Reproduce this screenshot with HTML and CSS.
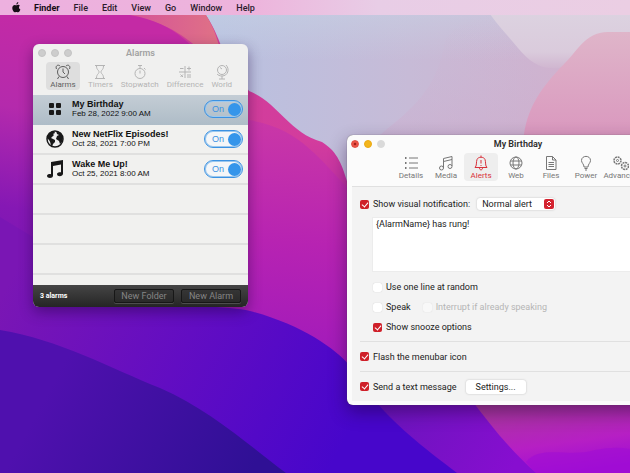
FILE: index.html
```html
<!DOCTYPE html>
<html lang="en">
<head>
<meta charset="utf-8">
<title>Alarms</title>
<link rel="stylesheet" href="styles.css">
</head>
<body>
<svg class="wallpaper" viewBox="0 0 630 473" preserveAspectRatio="none" aria-hidden="true">
  <defs>
    <linearGradient id="sky" x1="0" y1="0" x2="1" y2="0"><stop offset=".35" stop-color="#b9c1e0"/><stop offset=".65" stop-color="#c7bbd7"/><stop offset="1" stop-color="#d3aecb"/></linearGradient>
    <linearGradient id="mist" x1="0" y1="0" x2="0" y2="1"><stop offset="0" stop-color="#c8d6e6" stop-opacity=".6"/><stop offset="1" stop-color="#c8d6e6" stop-opacity="0"/></linearGradient>
    <linearGradient id="haze" x1="0" y1="0" x2="0" y2="1"><stop offset="0" stop-color="#dcd2e0"/><stop offset=".7" stop-color="#dacbdc"/><stop offset="1" stop-color="#d0b6d0"/></linearGradient>
    <linearGradient id="dusk" x1="0" y1="0" x2="0" y2="1"><stop offset="0" stop-color="#cfb9d3" stop-opacity="0"/><stop offset="1" stop-color="#cda9cc" stop-opacity=".5"/></linearGradient>
    <linearGradient id="rose" x1="0" y1="0" x2="0" y2="1"><stop offset="0" stop-color="#dfb5c9"/><stop offset="1" stop-color="#d994bd"/></linearGradient>
    <linearGradient id="ridge" gradientUnits="userSpaceOnUse" x1="0" y1="15" x2="0" y2="330"><stop offset="0" stop-color="#d04098"/><stop offset=".4" stop-color="#d33c9d"/><stop offset="1" stop-color="#8d12bf"/></linearGradient>
    <linearGradient id="magenta" gradientUnits="userSpaceOnUse" x1="60" y1="15" x2="0" y2="340"><stop offset="0" stop-color="#c42aa5"/><stop offset=".3" stop-color="#b42aac"/><stop offset=".6" stop-color="#8518b4"/><stop offset="1" stop-color="#6e12b4"/></linearGradient>
    <linearGradient id="middle" gradientUnits="userSpaceOnUse" x1="300" y1="125" x2="280" y2="360"><stop offset="0" stop-color="#c937a7"/><stop offset=".5" stop-color="#b723b2"/><stop offset="1" stop-color="#a11abb"/></linearGradient>
    <linearGradient id="coral" x1="0" y1="0" x2="1" y2="0"><stop offset="0" stop-color="#d4509a"/><stop offset="1" stop-color="#e07385"/></linearGradient>
    <linearGradient id="blue" gradientUnits="userSpaceOnUse" x1="20" y1="260" x2="350" y2="430"><stop offset="0" stop-color="#7a16b4"/><stop offset=".5" stop-color="#620dc2"/><stop offset="1" stop-color="#4706cb"/></linearGradient>
    <linearGradient id="indigo" gradientUnits="userSpaceOnUse" x1="60" y1="370" x2="250" y2="473"><stop offset="0" stop-color="#4f10ae"/><stop offset="1" stop-color="#2f1095"/></linearGradient>
    <linearGradient id="pinkfloor" gradientUnits="userSpaceOnUse" x1="550" y1="400" x2="560" y2="473"><stop offset="0" stop-color="#a8389c"/><stop offset=".6" stop-color="#b61fc4"/><stop offset="1" stop-color="#a00cd5"/></linearGradient>
    <linearGradient id="violet" gradientUnits="userSpaceOnUse" x1="390" y1="400" x2="510" y2="473"><stop offset="0" stop-color="#6b14bd"/><stop offset="1" stop-color="#870ed0"/></linearGradient>
  </defs>
  <rect width="630" height="473" fill="url(#sky)"/>
  <rect width="630" height="60" fill="url(#mist)"/>
  <path d="M380 135C410 110 438 90 445 40C455 25 470 20 490 15L535 72H590V150H370Z" fill="url(#dusk)"/>
  <path d="M490 14C500 28 510 38 518 48C530 62 540 70 560 68H630V14Z" fill="url(#haze)"/>
  <path d="M523 150C523 112 540 90 560 68C578 52 584 32 608 32H630V150Z" fill="url(#rose)"/>
  <path d="M0 0H195C214 24 216 34 223 50L249 91C278 102 288 132 322 142C338 152 342 165 348 184V473H0Z" fill="url(#ridge)"/>
  <path d="M120 0H195C214 24 216 34 223 60L200 50C175 27 155 20 120 14Z" fill="url(#coral)"/>
  <path d="M100 120H249C300 128 320 160 350 190V473H100Z" fill="url(#middle)"/>
  <path d="M0 15H130C180 24 190 48 220 70V120L120 310L0 340Z" fill="url(#magenta)"/>
  <path d="M0 217L33 237L120 300C180 306 230 306 250 311C300 324 335 348 350 366C390 395 410 440 460 473H0Z" fill="url(#blue)"/>
  <path d="M0 330C60 340 110 368 160 388C210 410 250 446 286 473H0Z" fill="url(#indigo)"/>
  <path d="M370 395H630V473H457C420 445 395 425 370 395Z" fill="url(#violet)"/>
  <path d="M468 395H630V473H536C512 452 490 425 468 395Z" fill="url(#pinkfloor)"/>
  <path d="M536 473L526 462C540 444 570 458 595 450Q615 446 630 449V473Z" fill="#a00ed4" opacity=".6"/>
</svg>

<div class="desktop">
  <nav class="menubar" aria-label="Menu bar">
    <svg class="apple" viewBox="0 0 10 12" aria-hidden="true"><path d="M7 0C7 1.500 6 2.700 4.800 2.700C4.700 1.500 5.700.300 7 0ZM8.700 4.100C7.200 5.100 7.500 7.400 9.300 8.200C8.800 9.700 7.800 11.300 6.800 11.300C6 11.300 5.800 10.900 4.900 10.900S3.800 11.300 3.200 11.300C1.800 11.300.300 8.500.300 6.500C.300 4.100 1.800 3.100 3.100 3.100C3.900 3.100 4.500 3.600 5 3.600C5.500 3.600 6.100 3 7.100 3C7.700 3 8.300 3.400 8.700 4.100Z"/></svg>
    <a href="#" class="app">Finder</a><a href="#">File</a><a href="#">Edit</a><a href="#">View</a><a href="#">Go</a><a href="#">Window</a><a href="#">Help</a>
  </nav>

  <section class="window alarms">
    <header class="titlebar"><div class="lights"><i></i><i></i><i></i></div><h1>Alarms</h1></header>
    <div class="tools">
      <button class="current"><svg viewBox="0 0 16 16"><circle cx="8" cy="8" r="5.500"/><path d="M8 4.500V8L10 10M4 12.500L2.500 15M12 12.500L13.500 15M1.500 5C0 2 3 0 5 2M14.500 5C16 2 13 0 11 2"/></svg>Alarms</button>
      <button><svg viewBox="0 0 16 16"><path d="M3 1.500H13M3 14.500H13M4.500 2C4.500 6 7 6 7 8S4.500 10 4.500 14M11.500 2C11.500 6 9 6 9 8S11.500 10 11.500 14"/></svg>Timers</button>
      <button><svg viewBox="0 0 16 16"><circle cx="8" cy="9.500" r="5"/><path d="M6 1.500H10M8 1.500V4.500M8 6.500V9.500M12 4L13.500 5.500"/></svg>Stopwatch</button>
      <button><svg viewBox="0 0 16 16"><path d="M8 2V14M2 8H14M3 4.500H6.500M10 4.500H14M12 2.500V6.500M3.500 10.500L6 13M6 10.500L3.500 13M10 11H14M10 13H14"/></svg>Difference</button>
      <button><svg viewBox="0 0 16 16"><circle cx="8" cy="6" r="4.500"/><path d="M12 1C16 5 14 12 8 12C5.500 12 4 11 3 10M8 12V15M5 15H11M6 3.500L8 5"/></svg>World</button>
    </div>
    <ul class="list">
      <li class="selected">
        <svg class="glyph" viewBox="0 0 18 18"><path d="M4 3H7Q8 3 8 4V7Q8 8 7 8H4Q3 8 3 7V4Q3 3 4 3ZM11 3H14Q15 3 15 4V7Q15 8 14 8H11Q10 8 10 7V4Q10 3 11 3ZM4 10H7Q8 10 8 11V14Q8 15 7 15H4Q3 15 3 14V11Q3 10 4 10ZM11 10H14Q15 10 15 11V14Q15 15 14 15H11Q10 15 10 14V11Q10 10 11 10Z"/></svg>
        <div class="text"><strong>My Birthday</strong><span>Feb 28, 2022 9:00 AM</span></div>
        <button class="switch" role="switch" aria-checked="true">On<i></i></button>
      </li>
      <li>
        <svg class="glyph" viewBox="0 0 18 18"><circle cx="9" cy="9" r="8" fill="#eee" stroke="#181818" stroke-width="1.500"/><path d="M2 5C4 2 6 1 8 1L9 3L7 4L8 5L6 7L5 8L7 9L9 10L9 12L7 14L6 17C4 15 5 12 3 10L1 8ZM10 1L15 3L17 8L16 12L14 14L13 11L10 9L11 6L13 5L11 4Z"/></svg>
        <div class="text"><strong>New NetFlix Episodes!</strong><span>Oct 28, 2021 7:00 PM</span></div>
        <button class="switch" role="switch" aria-checked="true">On<i></i></button>
      </li>
      <li>
        <svg class="glyph" viewBox="0 0 18 18"><path d="M5 2L17 0V13.500C17 17 11 17 11 14C11 12.500 13.500 12 15 12.300V4.500L7 6V15.500C7 19 1 18.500 1 16C1 14.300 3.500 13.800 5 14.200Z"/></svg>
        <div class="text"><strong>Wake Me Up!</strong><span>Oct 25, 2021 8:00 AM</span></div>
        <button class="switch" role="switch" aria-checked="true">On<i></i></button>
      </li>
    </ul>
    <footer class="status"><span>3 alarms</span><button>New Folder</button><button>New Alarm</button></footer>
  </section>

  <section class="window editor">
    <header class="titlebar"><div class="lights color"><i></i><i></i><i></i></div><h1>My Birthday</h1></header>
    <div class="tools">
      <button><svg viewBox="0 0 16 16"><path d="M6 3H15M6 8H15M6 13H15"/><path d="M2 3H3.500M2 8H3.500M2 13H3.500" stroke-width="2"/></svg>Details</button>
      <button><svg viewBox="0 0 16 16"><path d="M5.500 13V3.500L14 1.500V11M5.500 6.500L14 4.500"/><circle cx="3.500" cy="13" r="2"/><circle cx="12" cy="11.500" r="2"/></svg>Media</button>
      <button class="current"><svg viewBox="0 0 16 16"><path d="M2 12.500C4 11 3 7 4 4.500C5 1.500 11 1.500 12 4.500C13 7 12 11 14 12.500ZM6.500 13C6.500 15.500 9.500 15.500 9.500 13M8 .500V2M8 5V8.500M8 10V11"/></svg>Alerts</button>
      <button><svg viewBox="0 0 16 16"><circle cx="8" cy="8" r="6"/><ellipse cx="8" cy="8" rx="3" ry="6"/><path d="M2.500 6H13.500M2.500 10H13.500"/></svg>Web</button>
      <button><svg viewBox="0 0 16 16"><path d="M3.500 1.500H9.500L13 5V14.500H3.500ZM9.500 1.500V5H13M5.500 7.500H11M5.500 9.500H11M5.500 11.500H11"/></svg>Files</button>
      <button><svg viewBox="0 0 16 16"><path d="M6 12C6 9 3.500 8 3.500 5.500C3.500 0 12.500 0 12.500 5.500C12.500 8 10 9 10 12ZM6.500 13.500H9.500M7 15H9"/></svg>Power</button>
      <button><svg viewBox="0 0 16 16"><circle cx="4.500" cy="5.500" r="3.500" stroke-width="1.500" stroke-dasharray="2 .700"/><circle cx="4.500" cy="5.500" r="1"/><circle cx="12" cy="11" r="3.500" stroke-width="1.500" stroke-dasharray="2 .700"/><circle cx="12" cy="11" r="1"/></svg>Advanced</button>
    </div>
    <form class="form">
      <div class="row first"><label><input type="checkbox" checked>Show visual notification:</label>
        <span class="picker"><select aria-label="Alert style"><option>Normal alert</option></select><svg viewBox="0 0 10 10" aria-hidden="true"><path d="M3 4L5 2L7 4M3 6L5 8L7 6"/></svg></span></div>
      <textarea aria-label="Message">{AlarmName} has rung!</textarea>
      <div class="row sub"><label><input type="checkbox">Use one line at random</label></div>
      <div class="row sub"><label><input type="checkbox">Speak</label><label class="off"><input type="checkbox" disabled>Interrupt if already speaking</label></div>
      <div class="row sub"><label><input type="checkbox" checked>Show snooze options</label></div>
      <div class="row rule"><label><input type="checkbox" checked>Flash the menubar icon</label></div>
      <div class="row rule"><label><input type="checkbox" checked>Send a text message</label><button type="button" class="settings">Settings...</button></div>
    </form>
  </section>
</div>
</body>
</html>
```
FILE: styles.css
```css
* { box-sizing: border-box; }
body {
  margin: 0;
  height: 100vh;
  overflow: hidden;
  font: 9px/12px Roboto, "Liberation Sans", sans-serif;
  color: #222;
}
button, select, textarea { font: inherit; color: inherit; border: 0; padding: 0; margin: 0; background: none; }
.wallpaper { position: absolute; inset: 0; width: 100%; height: 100%; }
.desktop { position: relative; height: 100%; overflow: hidden; }

.menubar {
  display: flex;
  align-items: center;
  gap: 14px;
  height: 15px;
  padding: 0 12px;
  background: linear-gradient(90deg, #edb0df, #edb4dc 40%, #e8cde6 60%, #ebcee3);
}
.menubar a { color: #2b1a2b; text-decoration: none; font-weight: 500; }
.menubar .app { font-weight: 700; color: #160c16; }
.apple { width: 9px; height: 11px; margin-right: -1px; fill: #160c16; }

.window { position: absolute; display: flex; flex-direction: column; }
.titlebar { position: relative; height: 18px; display: flex; align-items: center; justify-content: center; }
.titlebar h1 { margin: 0; font-size: 9px; line-height: 12px; font-weight: 600; }
.lights { position: absolute; left: 5px; display: flex; gap: 5px; }
.lights i { width: 8px; height: 8px; border-radius: 50%; background: #cdcdcd; border: 1px solid #c3c3c3; }
.color i { border-color: #dadada; background: #dadada; }
.color i:nth-child(1) { background: radial-gradient(#a3201a 20%, #ec5347 40%); border-color: #e04c40; }
.color i:nth-child(2) { background: #f3b51c; border-color: #eba914; }

.tools { display: flex; }
.tools button {
  display: flex;
  flex-direction: column;
  align-items: center;
  border-radius: 4px;
  font-size: 8px;
  line-height: 9px;
}
.tools svg { width: 16px; height: 16px; fill: none; stroke: currentColor; stroke-width: 1; }

.alarms {
  left: 33px;
  top: 44px;
  width: 215px;
  border-radius: 6px;
  overflow: hidden;
  background: #f0f0ef;
  box-shadow: 0 5px 14px rgb(30 0 60 / 45%);
}
.alarms h1 { color: #a2a2a2; }
.alarms .tools { height: 33px; padding-left: 13px; gap: 8px; color: #b4b4b4; }
.alarms .tools button { height: 28px; padding: 2px 0 0; }
.alarms .tools .current { width: 34px; background: #dedede; color: #5e5e5e; }

.list {
  margin: 0;
  padding: 0;
  list-style: none;
  height: 190px;
  background: repeating-linear-gradient(#f1f1ef 0 28px, #e0e0df 28px 30px);
}
.list li { display: flex; align-items: center; height: 30px; padding: 0 5px 2px 13px; font-family: "Liberation Sans", sans-serif; color: #111; }
.list .selected { background: linear-gradient(#c4cdd5, #aebcc7); }
.glyph { width: 18px; height: 18px; margin-right: 8px; fill: #181818; }
.text { flex: 1; display: flex; flex-direction: column; line-height: 10px; font-size: 8px; }
.text strong { font-size: 9px; }
.switch {
  display: flex;
  align-items: center;
  justify-content: space-between;
  width: 39px;
  height: 18px;
  padding: 0 1px 0 7px;
  border: 1px solid #3c92e2;
  box-shadow: inset 0 0 0 1px #9ac7ee;
  border-radius: 9px;
  font-size: 9px;
  color: #3c92e2;
  background: #f4f6f8;
}
.selected .switch { background: transparent; }
.switch i { width: 13px; height: 13px; border-radius: 50%; background: #3595ea; }

.status {
  display: flex;
  align-items: center;
  gap: 7px;
  height: 22px;
  padding: 0 7px;
  background: linear-gradient(#454545, #252525);
}
.status span { flex: 1; color: #fff; font-weight: 700; font-size: 7px; }
.status button { width: 60px; height: 14px; border: 1px solid #171717; border-radius: 2px; color: #858585; background: linear-gradient(#353535, #2a2a2a); line-height: 12px; box-shadow: 0 1px #4d4d4d; }

.editor {
  left: 347px;
  right: -59px;
  top: 135px;
  border-radius: 6px;
  background: #fbfbfb;
  box-shadow: 0 7px 18px rgb(30 0 50 / 45%), 0 0 1px #555;
}
.editor h1 { color: #2c2c2c; }
.editor .lights { left: 4px; }
.editor .tools { padding: 0 0 5px 47px; gap: 1px; color: #777; }
.editor .tools button { width: 34px; height: 28px; padding-top: 2px; }
.editor .tools .current { background: #eee; color: #d9303a; }
.form { margin: 0 0 4px 5px; padding: 4px 0 0 8px; background: #f3f3f3; border-top: 1px solid #e0e0e0; }
.row { display: flex; align-items: center; height: 20px; }
.row label { display: flex; align-items: center; gap: 4px; }
.row.first { height: 26px; gap: 7px; }
.row.sub { padding-left: 13px; gap: 12px; }
.row.rule { height: 30px; gap: 9px; border-top: 1px solid #e0e0e0; }
.row.sub + .rule { margin-top: 4px; }
.off { color: #b5b5b5; }
input { appearance: none; width: 9px; height: 9px; margin: 0; border-radius: 2px; background: #fff; box-shadow: 0 0 1px #bbb; }
input:disabled { background: #f8f8f8; box-shadow: 0 0 1px #ccc; }
input:checked {
  background: #cf1f29;
  box-shadow: none;
}
input:checked::after {
  content: "";
  display: block;
  width: 3px;
  height: 5px;
  margin: 1px 3px;
  border: solid #fff;
  border-width: 0 1px 1px 0;
  transform: rotate(40deg);
}
.picker { display: flex; align-items: center; width: 78px; height: 12px; padding-right: 1px; background: #fff; border-radius: 3px; box-shadow: 0 0 2px #bbb; }
.picker select { appearance: none; flex: 1; padding-left: 5px; outline: 0; }
.picker svg { width: 10px; height: 10px; border-radius: 2px; background: #d42330; fill: none; stroke: #fff; stroke-width: 1; }
textarea { display: block; width: calc(100% - 12px); height: 55px; margin: 0 0 5px 12px; padding: 0 3px; background: #fff; border: 1px solid #ececec; resize: none; outline: 0; color: #222; }
.settings { width: 60px; height: 14px; background: #fff; border-radius: 3px; box-shadow: 0 0 2px #bbb; }
```
